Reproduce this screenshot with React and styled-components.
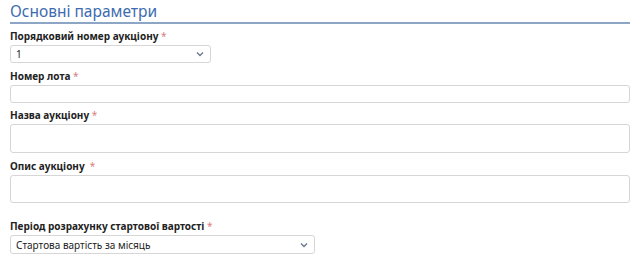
import React from 'react'
import styled, { createGlobalStyle } from 'styled-components';

const Global = createGlobalStyle`
  body {
    margin: 0;
    background: #fff;
    font-family: "Noto Sans", "Open Sans", sans-serif;
  }
`

const Chevron = () => (
	<svg width="8" height="6" viewBox="0 0 8 6">
		<path d="M1 1.5 L4 4.5 L7 1.5" fill="none" stroke="#6b7a90" strokeWidth="1.4" />
	</svg>
)

const Field = ({label, gap, children}) => (
	<Group gap={gap}>
		<Label>{label} <Star>*</Star></Label>
		{children}
	</Group>
)

const Select = ({value, width, h}) => (
	<SelectBox width={width} h={h}>
		<span>{value}</span>
		<Chevron />
	</SelectBox>
)

const App = () => {
	return (
		<Page>
			<Global />
			<Title>Основні параметри</Title>
			<Field label="Порядковий номер аукціону" gap={6}>
				<Select value="1" width={201} h={18} />
			</Field>
			<Field label="Номер лота" gap={7}>
				<Input h={18} />
			</Field>
			<Field label="Назва аукціону" gap={6}>
				<Input h={29} />
			</Field>
			<Field label="Опис аукціону " gap={7}>
				<Input h={28} />
			</Field>
			<Field label="Період розрахунку стартової вартості" gap={17}>
				<Select value="Стартова вартість за місяць" width={305} h={19} />
			</Field>
		</Page>
	)
};

export default App

const Page = styled.div`
	width: 620px;
	padding: 1px 0 0 10px;
	color: #222;
`
const Title = styled.h2`
	margin: 0;
	font-size: 15.5px;
	font-weight: 400;
	line-height: 21px;
	color: #3d6cb0;
	border-bottom: 2px solid #8ea6c6;
`
const Group = styled.div`
	display: flex;
	flex-direction: column;
	align-items: flex-start;
	margin-top: ${p => p.gap}px;
`
const Label = styled.label`
	font-size: 10px;
	font-weight: 700;
	line-height: 13px;
	margin-bottom: 2px;
	white-space: pre;
`
const Star = styled.span`
	color: #d98080;
	font-weight: 400;
`
const Input = styled.div`
	box-sizing: border-box;
	width: 620px;
	height: ${p => p.h}px;
	border: 1px solid #d6d6d6;
	border-radius: 3px;
	background: #fff;
`
const SelectBox = styled.div`
	box-sizing: border-box;
	width: ${p => p.width}px;
	height: ${p => p.h}px;
	display: flex;
	align-items: center;
	justify-content: space-between;
	padding: 0 6px 0 5px;
	border: 1px solid #d6d6d6;
	border-radius: 3px;
	font-size: 10px;
	color: #222;
`
